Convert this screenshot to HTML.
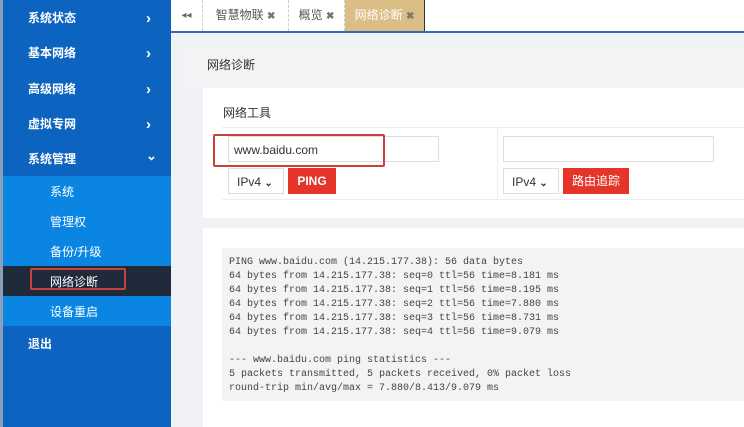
<!DOCTYPE html>
<html><head><meta charset="utf-8"><style>
*{margin:0;padding:0;box-sizing:border-box}
body{width:744px;height:427px;overflow:hidden;background:#f0f2f5;font-family:"Liberation Sans","Noto Sans CJK SC",sans-serif;position:relative}
.sb{position:absolute;left:0;top:0;width:171px;height:427px;background:#0c64c0;border-left:3px solid #8aa0b8}
.sb .it{position:absolute;left:25px;color:#fff;font-weight:bold;font-size:12px}
.sb .ar{position:absolute;left:143px;color:#fff;font-size:15px;font-weight:bold;line-height:15px}
.sub{position:absolute;left:3px;top:176px;width:168px;height:150px;background:#0a86e2}
.sub .s{position:absolute;left:47px;color:#fff;font-size:12px}
.act{position:absolute;left:3px;top:266px;width:168px;height:30px;background:#1f2a3a}
.tabs{position:absolute;left:171px;top:0;width:573px;height:33px;background:#fff;border-bottom:2px solid #2e6db0}
.tab{position:absolute;top:0;height:31px;line-height:31px;font-size:12px;color:#555;border-right:1px dashed #ccc;text-align:center}
.tab b{font-size:10px;color:#777}
.hd{position:absolute;left:182px;top:43px;width:562px;height:45px;background:#f2f3f5;font-size:12px;color:#333;padding:13px 0 0 25px}
.card{position:absolute;left:203px;top:88px;width:541px;height:130px;background:#fff}
.card2{position:absolute;left:203px;top:228px;width:541px;height:199px;background:#fff}
.inp{position:absolute;height:26px;border:1px solid #ddd;background:#fff;font-size:12px;color:#333;padding:6px 0 0 5px}
.sel{position:absolute;height:26px;width:56px;border:1px solid #ddd;background:#fff;font-size:12px;color:#333;padding:6px 0 0 8px}
.btn{position:absolute;height:26px;background:#e5352b;color:#fff;font-size:12px;text-align:center;line-height:26px}
pre{position:absolute;left:222px;top:248px;width:522px;height:153px;background:#f2f3f5;font-family:"Liberation Mono",monospace;font-size:10px;line-height:14px;color:#444;padding:8px 0 0 7px}
</style></head><body>
<div class="sb">
<div class="it" style="top:9px">系统状态</div><div class="ar" style="top:11px">›</div>
<div class="it" style="top:44px">基本网络</div><div class="ar" style="top:46px">›</div>
<div class="it" style="top:80px">高级网络</div><div class="ar" style="top:82px">›</div>
<div class="it" style="top:115px">虚拟专网</div><div class="ar" style="top:117px">›</div>
<div class="it" style="top:150px">系统管理</div><div class="ar" style="top:148px;font-size:13px">⌄</div>
<div class="it" style="top:335px">退出</div>
</div>
<div class="sub"></div>
<div class="act"></div>
<div class="sub" style="background:none">
<div class="s" style="top:7px">系统</div>
<div class="s" style="top:37px">管理权</div>
<div class="s" style="top:67px">备份/升级</div>
<div class="s" style="top:97px">网络诊断</div>
<div class="s" style="top:127px">设备重启</div>
</div>
<div style="position:absolute;left:30px;top:268px;width:96px;height:22px;border:2px solid #c9423a;border-radius:2px"></div>
<div class="tabs">
<div class="tab" style="left:0;width:32px;color:#666;font-size:10px">◂◂</div>
<div class="tab" style="left:32px;width:86px">智慧物联 <b>✖</b></div>
<div class="tab" style="left:118px;width:56px">概览 <b>✖</b></div>
<div class="tab" style="left:174px;width:80px;background:#dbbd86;color:#fff;border-right:1px solid #333">网络诊断 <b>✖</b></div>
</div>
<div class="hd">网络诊断</div>
<div class="card">
<div style="position:absolute;left:20px;top:16px;font-size:12px;color:#333">网络工具</div>
<div style="position:absolute;left:19px;top:39px;width:522px;height:73px;border-top:1px solid #eee;border-bottom:1px solid #eee"></div>
<div style="position:absolute;left:294px;top:39px;height:73px;border-left:1px solid #eee"></div>
</div>
<div class="inp" style="left:228px;top:136px;width:211px">www.baidu.com</div>
<div style="position:absolute;left:213px;top:134px;width:172px;height:33px;border:2px solid #c9423a;border-radius:2px"></div>
<div class="sel" style="left:228px;top:168px">IPv4 <b style="font-size:10px">⌄</b></div>
<div class="btn" style="left:288px;top:168px;width:48px;font-weight:bold">PING</div>
<div class="inp" style="left:503px;top:136px;width:211px"></div>
<div class="sel" style="left:503px;top:168px">IPv4 <b style="font-size:10px">⌄</b></div>
<div class="btn" style="left:563px;top:168px;width:66px">路由追踪</div>
<div class="card2"></div>
<pre>PING www.baidu.com (14.215.177.38): 56 data bytes
64 bytes from 14.215.177.38: seq=0 ttl=56 time=8.181 ms
64 bytes from 14.215.177.38: seq=1 ttl=56 time=8.195 ms
64 bytes from 14.215.177.38: seq=2 ttl=56 time=7.880 ms
64 bytes from 14.215.177.38: seq=3 ttl=56 time=8.731 ms
64 bytes from 14.215.177.38: seq=4 ttl=56 time=9.079 ms

--- www.baidu.com ping statistics ---
5 packets transmitted, 5 packets received, 0% packet loss
round-trip min/avg/max = 7.880/8.413/9.079 ms</pre>
</body></html>
